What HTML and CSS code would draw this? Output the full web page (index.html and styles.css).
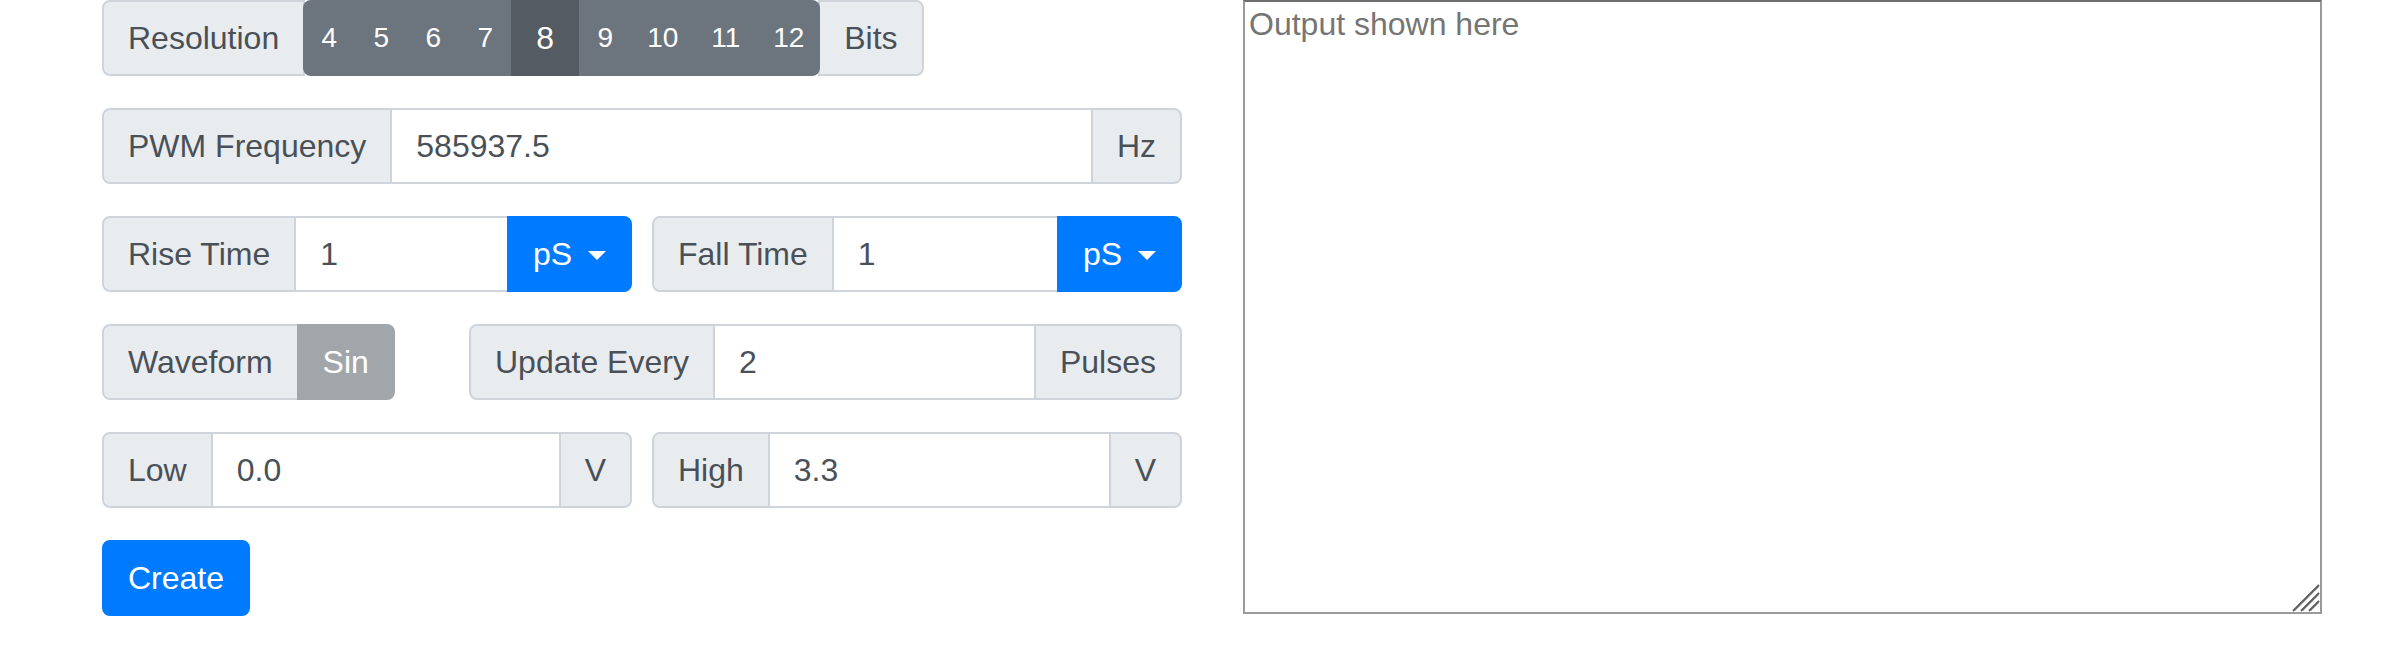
FILE: index.html
```html
<!DOCTYPE html>
<html lang="en">
<head>
<meta charset="utf-8">
<title>PWM Generator</title>
<link rel="stylesheet" href="styles.css">
</head>
<body>
<div class="page">
  <form class="controls">
    <div class="group group-inline">
      <span class="addon">Resolution</span>
      <div class="bits">
        <span class="opt">4</span>
        <span class="opt">5</span>
        <span class="opt">6</span>
        <span class="opt">7</span>
        <span class="opt active">8</span>
        <span class="opt">9</span>
        <span class="opt wide">10</span>
        <span class="opt wide">11</span>
        <span class="opt wide">12</span>
      </div>
      <span class="addon">Bits</span>
    </div>

    <div class="group">
      <span class="addon">PWM Frequency</span>
      <input class="field" type="text" value="585937.5">
      <span class="addon">Hz</span>
    </div>

    <div class="pair">
      <div class="group">
        <span class="addon">Rise Time</span>
        <input class="field" type="text" value="1">
        <button type="button" class="btn btn-primary dropdown">pS<span class="caret"></span></button>
      </div>
      <div class="group">
        <span class="addon">Fall Time</span>
        <input class="field" type="text" value="1">
        <button type="button" class="btn btn-primary dropdown">pS<span class="caret"></span></button>
      </div>
    </div>

    <div class="pair pair-wave">
      <div class="group group-inline">
        <span class="addon">Waveform</span>
        <button type="button" class="btn btn-disabled">Sin</button>
      </div>
      <div class="group">
        <span class="addon">Update Every</span>
        <input class="field" type="text" value="2">
        <span class="addon">Pulses</span>
      </div>
    </div>

    <div class="pair">
      <div class="group">
        <span class="addon">Low</span>
        <input class="field" type="text" value="0.0">
        <span class="addon">V</span>
      </div>
      <div class="group">
        <span class="addon">High</span>
        <input class="field" type="text" value="3.3">
        <span class="addon">V</span>
      </div>
    </div>

    <div class="actions">
      <button type="button" class="btn btn-primary create">Create</button>
    </div>
  </form>

  <div class="output-wrap">
    <textarea class="output" placeholder="Output shown here"></textarea>
    <svg class="grip" width="30" height="30" viewBox="0 0 30 30" aria-hidden="true">
      <line x1="3" y1="29" x2="29" y2="3" stroke="#5a5a5a" stroke-width="2"/>
      <line x1="5" y1="29" x2="29" y2="5" stroke="#c8c8c8" stroke-width="1"/>
      <line x1="11" y1="29" x2="29" y2="11" stroke="#5a5a5a" stroke-width="2"/>
      <line x1="13" y1="29" x2="29" y2="13" stroke="#c8c8c8" stroke-width="1"/>
      <line x1="19" y1="29" x2="29" y2="19" stroke="#5a5a5a" stroke-width="2"/>
      <line x1="21" y1="29" x2="29" y2="21" stroke="#c8c8c8" stroke-width="1"/>
    </svg>
  </div>
</div>
</body>
</html>
```

FILE: styles.css
```css
* {
  box-sizing: border-box;
}

html, body {
  margin: 0;
  padding: 0;
  background: #ffffff;
}

body {
  font-family: "Liberation Sans", Arial, Helvetica, sans-serif;
  font-size: 32px;
  line-height: 48px;
  color: #212529;
}

.page {
  display: flex;
  align-items: flex-start;
  padding-left: 102px;
  gap: 61px;
}

.controls {
  width: 1080px;
  display: flex;
  flex-direction: column;
  gap: 32px;
  margin: 0;
}

.group {
  display: flex;
  align-items: stretch;
  height: 76px;
  width: 100%;
}

.group-inline {
  width: auto;
  align-self: flex-start;
}

.group > * + * {
  margin-left: -2px;
}

.addon {
  display: flex;
  align-items: center;
  padding: 0 24px;
  background: #e9ecef;
  border: 2px solid #ced4da;
  color: #495057;
  white-space: nowrap;
}

.group > :first-child {
  border-radius: 8px 0 0 8px;
}

.group > :last-child {
  border-radius: 0 8px 8px 0;
}

.field {
  flex: 1 1 auto;
  min-width: 0;
  width: 1%;
  padding: 0 24px;
  border: 2px solid #ced4da;
  background: #ffffff;
  color: #495057;
  font-family: inherit;
  font-size: 32px;
  line-height: 48px;
  outline: none;
}

.bits {
  display: flex;
  background: #6c757d;
  border-radius: 8px;
  position: relative;
  z-index: 1;
}

.group > .bits {
  border-radius: 8px;
  overflow: hidden;
}

.opt {
  display: flex;
  align-items: center;
  justify-content: center;
  width: 52px;
  color: #ffffff;
  font-size: 28px;
}

.opt.wide {
  width: 63px;
}

.opt.active {
  width: 68px;
  background: #545b62;
  font-size: 32px;
}

.btn {
  display: flex;
  align-items: center;
  justify-content: center;
  padding: 0 24px;
  border: 2px solid transparent;
  border-radius: 8px;
  font-family: inherit;
  font-size: 32px;
  line-height: 48px;
  cursor: pointer;
}

.btn-primary {
  background: #007bff;
  border-color: #007bff;
  color: #ffffff;
  position: relative;
  z-index: 1;
}

.dropdown {
  padding: 0 24px;
  width: 125px;
}

.caret {
  display: inline-block;
  margin-left: 16px;
  width: 0;
  height: 0;
  border-top: 9px solid #ffffff;
  border-left: 9px solid transparent;
  border-right: 9px solid transparent;
  margin-top: 2px;
}

.btn-disabled {
  background: #a1a6ab;
  border-color: #a1a6ab;
  color: #ffffff;
  cursor: default;
}

.pair {
  display: grid;
  grid-template-columns: 1fr 1fr;
  gap: 20px;
}

.pair-wave {
  grid-template-columns: 347px 1fr;
}

.actions {
  display: flex;
}

.create {
  height: 76px;
}

.output-wrap {
  position: relative;
  width: 1079px;
  height: 614px;
}

.output {
  display: block;
  width: 100%;
  height: 100%;
  margin: 0;
  padding: 4px;
  border: 2px solid #9a9a9a;
  border-top-color: #6e6e6e;
  font-family: "Liberation Sans", Arial, Helvetica, sans-serif;
  font-size: 32px;
  color: #212529;
  background: #ffffff;
  resize: none;
  outline: none;
}

.output::placeholder {
  color: #757575;
}

.grip {
  position: absolute;
  right: 2px;
  bottom: 2px;
  pointer-events: none;
}
```
